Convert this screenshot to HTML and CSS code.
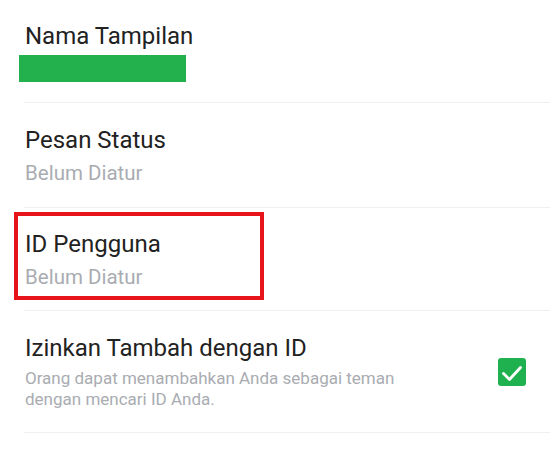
FILE: index.html
```html
<!DOCTYPE html>
<html lang="id">
<head>
  <meta charset="UTF-8" />
  <meta name="viewport" content="width=device-width, initial-scale=1.0" />
  <title>Profil</title>
  <link rel="stylesheet" href="styles.css">
</head>
<body>
  <ul class="settings">
    <li class="row row-name">
      <div class="row-title">Nama Tampilan</div>
      <div class="name-bar"></div>
    </li>

    <li class="row">
      <div class="row-title">Pesan Status</div>
      <div class="row-sub">Belum Diatur</div>
    </li>

    <li class="row row-marked">
      <div class="marked">
        <div class="row-title">ID Pengguna</div>
        <div class="row-sub">Belum Diatur</div>
      </div>
    </li>

    <li class="row row-toggle">
      <div class="toggle-text">
        <div class="row-title">Izinkan Tambah dengan ID</div>
        <div class="row-desc">Orang dapat menambahkan Anda sebagai teman dengan mencari ID Anda.</div>
      </div>
      <span class="check">
        <svg viewBox="0 0 28 28" width="28" height="28">
          <path d="M5.5 15.5l6 6L22.5 9.5" fill="none" stroke="#fff" stroke-width="2.8" stroke-linecap="round" stroke-linejoin="round" />
        </svg>
      </span>
    </li>
  </ul>
</body>
</html>
```

FILE: styles.css
```css
:root {
  --text: #222;
  --muted: #a9acb1;
  --line: #efefef;
  --green: #1fb14f;
  --mark: #e8141b;
}

* {
  box-sizing: border-box;
  margin: 0;
  padding: 0;
}

body {
  background: #fff;
  font-family: Roboto, "Noto Sans", sans-serif;
  color: var(--text);
}

.settings {
  list-style: none;
}

.row {
  margin-left: 24px;
  padding: 23px 0 22px 1px;
  border-bottom: 1px solid var(--line);
}

.row-title {
  font-size: 24px;
  line-height: 28px;
}

.row-sub {
  font-size: 20.5px;
  line-height: 24px;
  color: var(--muted);
  margin-top: 7px;
}

.row-name {
  padding: 22px 0 20px 1px;
}

.name-bar {
  width: 167px;
  height: 27px;
  margin: 5px 0 0 -6px;
  background: #22b14c;
}

.row-marked {
  padding: 4px 0 10px 0;
}

.marked {
  width: 250px;
  height: 88px;
  margin-left: -10px;
  padding: 14px 0 0 7px;
  border: 4px solid var(--mark);
}

.row-toggle {
  display: flex;
  align-items: center;
  justify-content: space-between;
  padding-right: 24px;
}

.row-desc {
  font-size: 17px;
  line-height: 21px;
  color: var(--muted);
  margin-top: 6px;
  max-width: 420px;
}

.check {
  display: flex;
  width: 28px;
  height: 28px;
  border-radius: 3px;
  background: var(--green);
}
```
